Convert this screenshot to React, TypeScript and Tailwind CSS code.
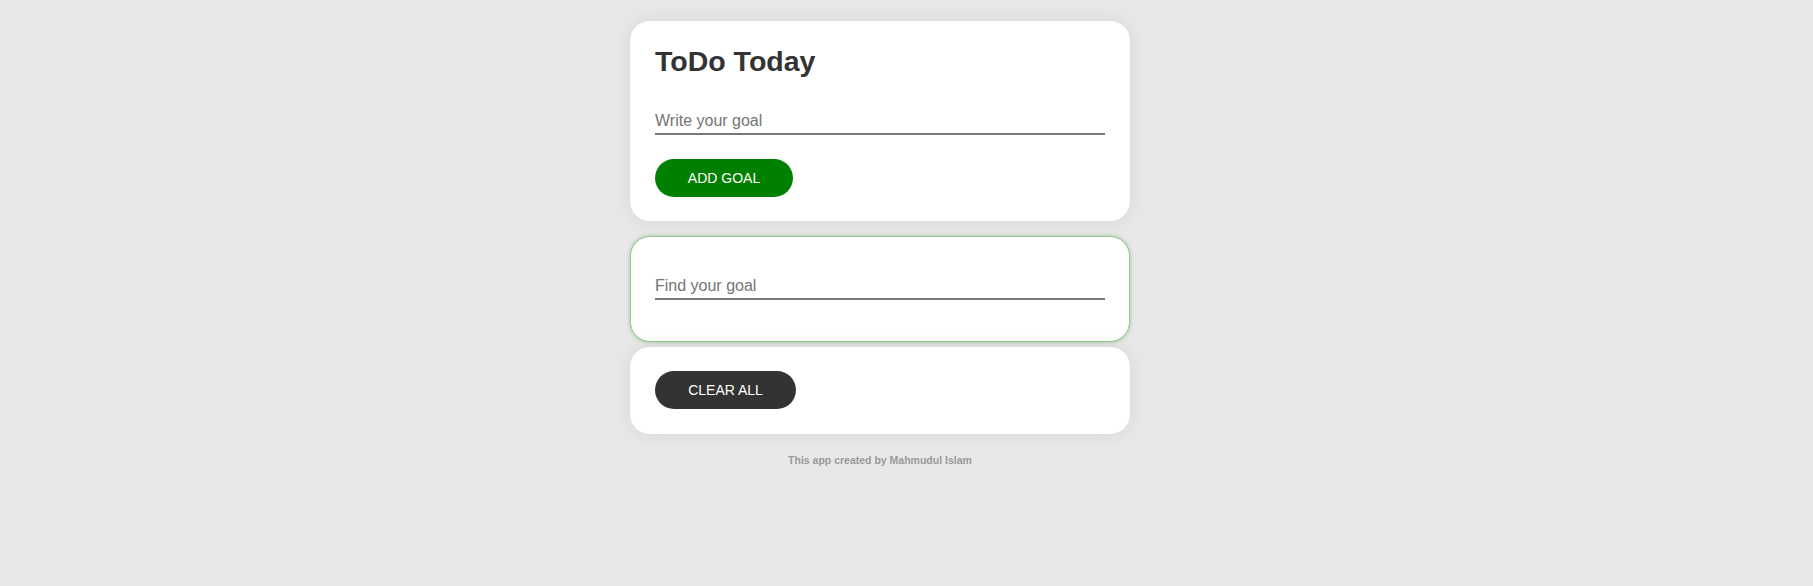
import { useState } from 'react'

export default function App() {
  const [goal, setGoal] = useState('')
  const [search, setSearch] = useState('')

  return (
    <div className="min-h-[586px] bg-[#e8e8e8] font-['Liberation_Sans',Arial,sans-serif] text-[#333]">
      <div className="ml-[630px] w-[500px] pt-[21px]">
        {/* Add goal */}
        <div className="rounded-[20px] bg-white px-[25px] pt-[25px] pb-[24px] shadow-[0_0_20px_rgba(0,0,0,0.08)]">
          <h1 className="text-[28.5px] font-bold leading-[30px] text-[#333]">ToDo Today</h1>
          <input
            value={goal}
            onChange={(e) => setGoal(e.target.value)}
            placeholder="Write your goal"
            className="mt-[34px] block h-[25px] w-full border-b-2 border-[#777] pb-[2px] text-[16px] leading-[20px] text-[#333] outline-none placeholder:text-[#757575]"
          />
          <button className="mt-[24px] h-[38px] w-[138px] rounded-full bg-[#008000] text-[14px] text-white">
            ADD GOAL
          </button>
        </div>

        {/* Search */}
        <div className="mt-[15px] rounded-[20px] border border-[#8fc98f] bg-white px-[24px] pt-[38px] pb-[41px] shadow-[0_0_4px_rgba(0,128,0,0.35)]">
          <input
            value={search}
            onChange={(e) => setSearch(e.target.value)}
            placeholder="Find your goal"
            className="block h-[25px] w-full border-b-2 border-[#777] pb-[2px] text-[16px] leading-[20px] text-[#333] outline-none placeholder:text-[#757575]"
          />
        </div>

        {/* Clear */}
        <div className="mt-[5px] rounded-[20px] bg-white px-[25px] pt-[24px] pb-[25px] shadow-[0_0_20px_rgba(0,0,0,0.08)]">
          <button className="h-[38px] w-[141px] rounded-full bg-[#333] text-[14px] text-white">CLEAR ALL</button>
        </div>

        <p className="mt-[19px] text-center text-[10.5px] font-bold text-[#999]">This app created by Mahmudul Islam</p>
      </div>
    </div>
  )
}
